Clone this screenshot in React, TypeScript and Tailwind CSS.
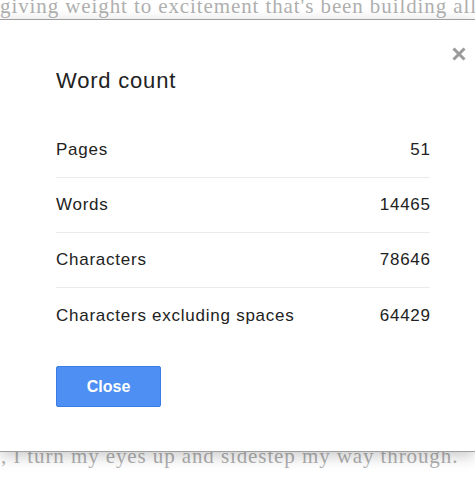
const rows = [
  { label: "Pages", value: "51" },
  { label: "Words", value: "14465" },
  { label: "Characters", value: "78646" },
  { label: "Characters excluding spaces", value: "64429" },
];

export default function App() {
  return (
    <div className="relative h-[483px] w-[475px] overflow-hidden bg-white">
      <div className="h-[19px] overflow-hidden">
        <p className="-mt-[4px] whitespace-nowrap font-['Liberation_Serif',serif] text-[21px] leading-[20px] tracking-[0.9px] text-[#b0b0b0]">
          giving weight to excitement that's been building all day
        </p>
      </div>

      <div className="relative z-10 border-y border-[#a0a0a0] bg-white pb-[44px] pl-[56px] pr-[45px] pt-[48px] font-['Liberation_Sans',Arial,sans-serif] text-[#222] shadow-[0_4px_14px_rgba(0,0,0,0.22)]">
        <button className="absolute right-[8px] top-[26px] h-[16px] w-[16px]" aria-label="Close">
          <svg viewBox="0 0 16 16" className="h-[16px] w-[16px]">
            <path d="M2.5 2.5 L13.5 13.5 M13.5 2.5 L2.5 13.5" stroke="#9a9a9a" strokeWidth="3" />
          </svg>
        </button>

        <h2 className="text-[22px] leading-[26px] tracking-[0.8px]">Word count</h2>

        <div className="mt-[29px]">
          {rows.map((r, i) => (
            <div
              key={r.label}
              className={`flex h-[55px] items-center justify-between text-[17px] tracking-[0.75px] ${
                i < rows.length - 1 ? "border-b border-[#ebebeb]" : ""
              }`}
            >
              <span>{r.label}</span>
              <span className="-mr-[0.75px]">{r.value}</span>
            </div>
          ))}
        </div>

        <button className="mt-[23px] h-[41px] w-[105px] rounded-[2px] border border-[#3a7ce6] bg-[#4d8ff2] text-[16px] font-bold text-white">
          Close
        </button>
      </div>

      <p className="-mt-[6px] whitespace-nowrap pl-[1px] font-['Liberation_Serif',serif] text-[21px] leading-[20px] tracking-[0.9px] text-[#b0b0b0]">
        , I turn my eyes up and sidestep my way through.
      </p>
    </div>
  );
}
